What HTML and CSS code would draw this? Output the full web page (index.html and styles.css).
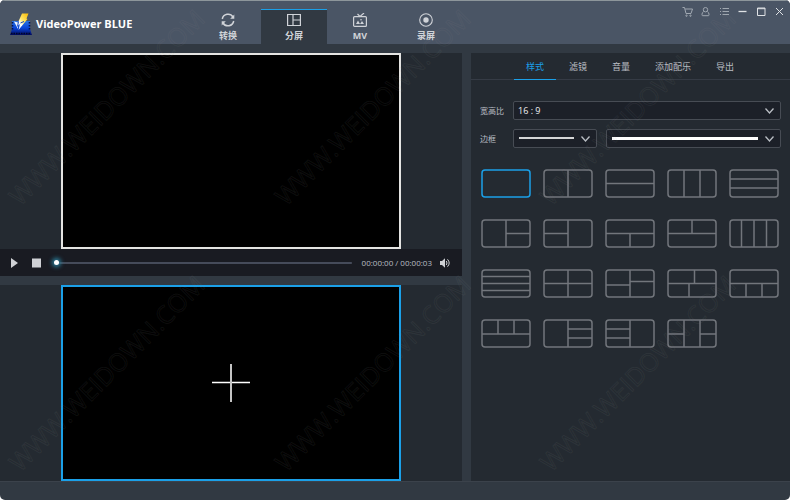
FILE: index.html
```html
<!DOCTYPE html>
<html lang="zh-CN">
<head>
<meta charset="utf-8">
<meta name="viewport" content="width=device-width, initial-scale=1">
<title>VideoPower BLUE</title>
<link rel="stylesheet" href="styles.css">
</head>
<body>
<div class="window">
  <header class="header">
    <div class="brand">
      <svg class="brand-logo" viewBox="0 0 22 22" aria-hidden="true">
        <defs>
          <linearGradient id="film" x1="0" y1="0" x2="0" y2="1">
            <stop offset="0" stop-color="#2c74e0"/><stop offset=".5" stop-color="#0a45d8"/><stop offset="1" stop-color="#020a5c"/>
          </linearGradient>
          <linearGradient id="bolt" x1="1" y1="0" x2="0" y2="1">
            <stop offset="0" stop-color="#f7b800"/><stop offset=".4" stop-color="#ffe566"/><stop offset=".6" stop-color="#fff"/><stop offset="1" stop-color="#c9dcff"/>
          </linearGradient>
        </defs>
        <path d="M2 8h18v8l2 6H0l2-6z" fill="url(#film)"/>
        <path d="M2.5 9v9M19.5 9v9" stroke="#04134f" stroke-width="1.6" stroke-dasharray="1.5 1.5"/>
        <path d="M1 20.5h20" stroke="#01052b" stroke-width="1.4" stroke-dasharray="1.5 1"/>
        <path d="M12 0.500h6.500l-2 5 1 .5L8.500 17l1.500-6-2 1.500L8 16 4 8.500l4 1z" fill="url(#bolt)"/>
        <path d="M8.500 8.500l-1 5M10.500 10l3.500-1.500" stroke="#1748bd" stroke-width="1" fill="none"/>
      </svg>
      <span class="brand-name">VideoPower BLUE</span>
    </div>
    <nav class="modes">
      <a class="mode" href="#convert">
        <svg viewBox="0 0 14 14" aria-hidden="true"><path d="M1.300 6A5.800 5.800 0 0 1 12 4M12.700 8A5.800 5.800 0 0 1 2 10" stroke-width="1.500"/><path d="M13.300 1.500v4.200H9.200zM.7 12.500V8.300h4.100z" fill="currentColor" stroke="none"/></svg>
        <span>转换</span>
      </a>
      <a class="mode mode-active" href="#split" aria-current="page">
        <svg viewBox="0 0 14 14" aria-hidden="true"><path d="M.6 1.500h12.800v11H.6zM6 1.500v11M6 7h7.400" stroke-width="1.200"/></svg>
        <span>分屏</span>
      </a>
      <a class="mode" href="#mv">
        <svg viewBox="0 0 14 14" aria-hidden="true"><rect x=".6" y="3.600" width="12.800" height="9.800" rx="1" stroke-width="1.200"/><path d="M4.500 1l2.500 2.500L11 0" stroke-width="1.200"/><path d="M3 11l2-3.500L7 11zM7 11l2-3 2 3z" fill="currentColor" stroke="none"/><circle cx="8" cy="6.800" r=".8" fill="currentColor" stroke="none"/></svg>
        <span>MV</span>
      </a>
      <a class="mode" href="#record">
        <svg viewBox="0 0 14 14" aria-hidden="true"><circle cx="7" cy="7" r="6.300" stroke-width="1.100"/><circle cx="7" cy="7" r="2.700" fill="currentColor" stroke="none"/></svg>
        <span>录屏</span>
      </a>
    </nav>
    <div class="window-tools">
      <button type="button" aria-label="购物车"><svg viewBox="0 0 13 13"><path d="M1.500 2.500h2l1.500 6h5l1.500-4.500H4.200"/><circle cx="5.500" cy="10.700" r=".7"/><circle cx="9.500" cy="10.700" r=".7"/></svg></button>
      <button type="button" aria-label="用户"><svg viewBox="0 0 13 13"><circle cx="6.500" cy="4.700" r="2.200"/><path d="M4.700 6.500Q3 7.500 3 9.300V10q0 .7.700.7h5.600q.7 0 .7-.7v-.7q0-1.800-1.700-2.800"/></svg></button>
      <button type="button" aria-label="菜单"><svg viewBox="0 0 13 13"><path d="M2 3.500h1M2 6.500h1M2 9.500h1M4.500 3.500H11M4.500 6.500H11M4.500 9.500H11"/></svg></button>
      <button type="button" class="bright" aria-label="最小化"><svg viewBox="0 0 13 13"><path d="M2.500 6.500h8" stroke-width="1.300"/></svg></button>
      <button type="button" class="bright" aria-label="最大化"><svg viewBox="0 0 13 13"><path d="M2.500 3h7.500v7.500H2.500zM2.500 3.700H10"/></svg></button>
      <button type="button" class="bright" aria-label="关闭"><svg viewBox="0 0 13 13"><path d="M3 3l7 7M10 3l-7 7"/></svg></button>
    </div>
  </header>

  <main class="workspace">
    <section class="player">
      <div class="stage"><div class="screen"></div></div>
      <div class="controls">
        <button type="button" aria-label="播放"><svg viewBox="0 0 10 10"><path d="M1 0v10L8 5z"/></svg></button>
        <button type="button" aria-label="停止"><svg viewBox="0 0 10 10"><path d="M0 .5h9v9H0z"/></svg></button>
        <input class="seek" type="range" min="0" max="100" value="0" aria-label="播放进度">
        <span class="time">00:00:00 / 00:00:03</span>
        <button type="button" aria-label="音量"><svg viewBox="0 0 10 10"><path d="M0 3h2l3-2.800v9.600L2 7H0z"/><path class="wave" d="M6.300 3q1.400 2 0 4M7.500 1.300q3.400 3.700 0 7.400"/></svg></button>
      </div>
      <div class="stage stage-source">
        <button type="button" class="screen screen-selected" aria-label="添加视频">
          <svg class="plus" viewBox="0 0 38 38"><path d="M0 18.500h38" stroke="#fff" stroke-width="1.500"/><path d="M19 0v38" stroke="#c4c4c4" stroke-width="2"/></svg>
        </button>
      </div>
    </section>

    <aside class="settings">
      <nav class="tabs">
        <a class="tab tab-active" href="#style" aria-current="true">样式</a>
        <a class="tab" href="#filter">滤镜</a>
        <a class="tab" href="#volume">音量</a>
        <a class="tab" href="#music">添加配乐</a>
        <a class="tab" href="#export">导出</a>
      </nav>
      <form class="options">
        <label for="ratio">宽高比</label>
        <div class="fields">
          <div class="field">
            <select id="ratio"><option>16 : 9</option><option>4 : 3</option><option>1 : 1</option></select>
            <svg class="chevron" viewBox="0 0 9 6"><path d="M.5.500l4 4.500 4-4.500"/></svg>
          </div>
        </div>
        <label for="border-width">边框</label>
        <div class="fields">
          <div class="field field-narrow">
            <select id="border-width" class="line-select"><option>2</option><option>4</option></select>
            <span class="line line-thin"></span>
            <svg class="chevron" viewBox="0 0 9 6"><path d="M.5.500l4 4.500 4-4.500"/></svg>
          </div>
          <div class="field">
            <select class="line-select" aria-label="边框颜色"><option>白</option><option>黑</option></select>
            <span class="line"></span>
            <svg class="chevron" viewBox="0 0 9 6"><path d="M.5.500l4 4.500 4-4.500"/></svg>
          </div>
        </div>
      </form>
      <div class="layouts">
        <button type="button" class="layout layout-active" aria-label="布局 1" aria-pressed="true"><svg viewBox="0 0 50 29"><rect x="1" y="1" width="48" height="27" rx="3"/></svg></button>
        <button type="button" class="layout" aria-label="布局 2"><svg viewBox="0 0 50 29"><rect x="1" y="1" width="48" height="27" rx="3"/><path d="M25 1v27"/></svg></button>
        <button type="button" class="layout" aria-label="布局 3"><svg viewBox="0 0 50 29"><rect x="1" y="1" width="48" height="27" rx="3"/><path d="M1 14.500h48"/></svg></button>
        <button type="button" class="layout" aria-label="布局 4"><svg viewBox="0 0 50 29"><rect x="1" y="1" width="48" height="27" rx="3"/><path d="M17 1v27M33 1v27"/></svg></button>
        <button type="button" class="layout" aria-label="布局 5"><svg viewBox="0 0 50 29"><rect x="1" y="1" width="48" height="27" rx="3"/><path d="M1 10h48M1 19h48"/></svg></button>
        <button type="button" class="layout" aria-label="布局 6"><svg viewBox="0 0 50 29"><rect x="1" y="1" width="48" height="27" rx="3"/><path d="M25 1v27M25 14.500h24"/></svg></button>
        <button type="button" class="layout" aria-label="布局 7"><svg viewBox="0 0 50 29"><rect x="1" y="1" width="48" height="27" rx="3"/><path d="M25 1v27M1 14.500h24"/></svg></button>
        <button type="button" class="layout" aria-label="布局 8"><svg viewBox="0 0 50 29"><rect x="1" y="1" width="48" height="27" rx="3"/><path d="M1 14.500h48M25 14.500V28"/></svg></button>
        <button type="button" class="layout" aria-label="布局 9"><svg viewBox="0 0 50 29"><rect x="1" y="1" width="48" height="27" rx="3"/><path d="M1 14.500h48M25 1v13.500"/></svg></button>
        <button type="button" class="layout" aria-label="布局 10"><svg viewBox="0 0 50 29"><rect x="1" y="1" width="48" height="27" rx="3"/><path d="M12.500 1v27M25 1v27M37.500 1v27"/></svg></button>
        <button type="button" class="layout" aria-label="布局 11"><svg viewBox="0 0 50 29"><rect x="1" y="1" width="48" height="27" rx="3"/><path d="M1 7.500h48M1 14.500h48M1 21.500h48"/></svg></button>
        <button type="button" class="layout" aria-label="布局 12"><svg viewBox="0 0 50 29"><rect x="1" y="1" width="48" height="27" rx="3"/><path d="M25 1v27M1 14.500h48"/></svg></button>
        <button type="button" class="layout" aria-label="布局 13"><svg viewBox="0 0 50 29"><rect x="1" y="1" width="48" height="27" rx="3"/><path d="M25 1v27M1 16h24M25 12.500h24"/></svg></button>
        <button type="button" class="layout" aria-label="布局 14"><svg viewBox="0 0 50 29"><rect x="1" y="1" width="48" height="27" rx="3"/><path d="M1 14.500h48M27.500 1v13.500M22 14.500V28"/></svg></button>
        <button type="button" class="layout" aria-label="布局 15"><svg viewBox="0 0 50 29"><rect x="1" y="1" width="48" height="27" rx="3"/><path d="M1 14.500h48M17 14.500V28M33 14.500V28"/></svg></button>
        <button type="button" class="layout" aria-label="布局 16"><svg viewBox="0 0 50 29"><rect x="1" y="1" width="48" height="27" rx="3"/><path d="M1 15h48M17 1v14M33 1v14"/></svg></button>
        <button type="button" class="layout" aria-label="布局 17"><svg viewBox="0 0 50 29"><rect x="1" y="1" width="48" height="27" rx="3"/><path d="M25 1v27M25 10h24M25 19h24"/></svg></button>
        <button type="button" class="layout" aria-label="布局 18"><svg viewBox="0 0 50 29"><rect x="1" y="1" width="48" height="27" rx="3"/><path d="M25 1v27M1 10h24M1 19h24"/></svg></button>
        <button type="button" class="layout" aria-label="布局 19"><svg viewBox="0 0 50 29"><rect x="1" y="1" width="48" height="27" rx="3"/><path d="M17 1v27M33 1v27M1 15h16M33 15h16"/></svg></button>
      </div>
    </aside>
  </main>
  <footer class="footer"></footer>

  <svg class="watermark" aria-hidden="true">
    <g>
      <text transform="translate(20 207) rotate(-45)">WWW.WEIDOWN.COM</text>
      <text transform="translate(286 207) rotate(-45)">WWW.WEIDOWN.COM</text>
      <text transform="translate(551 207) rotate(-45)">WWW.WEIDOWN.COM</text>
      <text transform="translate(20 473) rotate(-45)">WWW.WEIDOWN.COM</text>
      <text transform="translate(286 473) rotate(-45)">WWW.WEIDOWN.COM</text>
      <text transform="translate(551 473) rotate(-45)">WWW.WEIDOWN.COM</text>
    </g>
  </svg>
</div>
</body>
</html>
```
FILE: styles.css
```css
* {
  box-sizing: border-box;
}

body {
  margin: 0;
  background: #fff;
  color: #b9bdc3;
  font: 9px/12px "Open Sans", "Noto Sans CJK SC", sans-serif;
}

button {
  padding: 0;
  border: 0;
  background: none;
  color: inherit;
  font: inherit;
}

a {
  color: inherit;
  text-decoration: none;
}

svg {
  display: block;
}

.window {
  position: relative;
  display: flex;
  flex-direction: column;
  min-height: 100vh;
  overflow: hidden;
  border-radius: 5px;
  background: #313942;
}

/* Header */

.header {
  display: flex;
  height: 44px;
  border-top: 1px solid #8d969b;
  background: #4a5565;
}

.brand {
  display: flex;
  flex: 0 0 195px;
  align-items: center;
  gap: 4px;
  padding: 3px 0 0 10px;
}

.brand-logo {
  width: 22px;
  height: 22px;
}

.brand-name {
  color: #fff;
  font-size: 11px;
  font-weight: 700;
}

.modes {
  display: flex;
  flex: 1;
  padding-top: 8px;
}

.mode {
  display: flex;
  flex-direction: column;
  align-items: center;
  gap: 3px;
  width: 66px;
  padding-top: 3px;
  border-top: 1px solid transparent;
  color: #d0d3d8;
  font-weight: 700;
}

.mode svg {
  width: 14px;
  height: 14px;
  fill: none;
  stroke: currentColor;
}

.mode-active {
  border-top-color: #1ba0e8;
  background: #313942;
}

.window-tools {
  display: flex;
  justify-content: space-between;
  width: 109px;
  padding: 4px 4px 0 0;
}

.window-tools button {
  width: 13px;
  height: 13px;
  color: #a0a8b1;
}

.window-tools .bright {
  color: #dfe2e5;
}

.window-tools svg {
  fill: none;
  stroke: currentColor;
}

/* Workspace */

.workspace {
  display: grid;
  flex: 1;
  grid-template-columns: 462fr 319fr;
  gap: 9px;
  padding-top: 9px;
}

.player {
  display: flex;
  flex-direction: column;
}

.stage {
  display: flex;
  flex: 1;
  padding: 0 61px;
  background: #242a31;
}

.stage-source {
  margin-top: 9px;
}

.screen {
  flex: 1;
  border: 2px solid #e4e4e2;
  background: #000;
}

.screen-selected {
  display: grid;
  place-items: center;
  border-color: #1ba0e8;
}

.plus {
  width: 38px;
  height: 38px;
}

.controls {
  display: flex;
  align-items: center;
  gap: 8px;
  height: 27px;
  padding: 0 12px 0 10px;
  background: #191b22;
}

.controls button + button {
  margin-left: 4px;
}

.controls button svg {
  width: 10px;
  height: 10px;
  fill: #cfd1d5;
}

.controls .wave {
  fill: none;
  stroke: #cfd1d5;
}

.seek {
  flex: 1;
  min-width: 0;
  height: 12px;
  margin: 0 2px 0 4px;
  appearance: none;
  background: linear-gradient(#454b5a, #454b5a) center / 100% 2px no-repeat;
}

.seek::-webkit-slider-thumb {
  width: 5px;
  height: 5px;
  appearance: none;
  border-radius: 50%;
  background: #fff;
  box-shadow: 0 0 4px 2px #2b7f9c;
}

.time {
  font-size: 8px;
  white-space: nowrap;
}

/* Settings panel */

.settings {
  background: #242a31;
}

.tabs {
  display: flex;
  gap: 1px;
  height: 27px;
  padding-left: 43px;
  border-bottom: 1px solid #353b45;
}

.tab {
  height: 27px;
  padding: 0 12px;
  border-bottom: 1px solid transparent;
  line-height: 27px;
}

.tab-active {
  border-bottom-color: #1ba0e8;
  color: #1ba0e8;
}

.options {
  display: grid;
  grid-template-columns: 24px 1fr;
  align-items: center;
  gap: 9px;
  padding: 21px 9px 0;
}

.options label {
  font-size: 8px;
  white-space: nowrap;
}

.fields {
  display: flex;
  gap: 9px;
}

.field {
  position: relative;
  display: flex;
  flex: 1;
}

.field-narrow {
  flex: 0 0 84px;
}

.field select {
  width: 100%;
  height: 19px;
  padding: 0 4px;
  appearance: none;
  border: 1px solid #474c54;
  border-radius: 2px;
  background: #1c2028;
  color: #f0f1f3;
  font: inherit;
}

.field .line-select {
  color: transparent;
}

.line {
  position: absolute;
  top: 8px;
  right: 23px;
  left: 6px;
  height: 3px;
  background: #fff;
  pointer-events: none;
}

.line-thin {
  height: 2px;
  background: #d5d6d7;
}

.chevron {
  position: absolute;
  top: 7px;
  right: 7px;
  width: 9px;
  height: 6px;
  fill: none;
  stroke: #b9bdc3;
  stroke-width: 1.3;
  pointer-events: none;
}

.layouts {
  display: grid;
  grid-template-columns: repeat(5, 50px);
  justify-content: space-between;
  row-gap: 21px;
  padding: 21px 11px 0 10px;
}

.layout {
  height: 29px;
}

.layout svg {
  width: 50px;
  height: 29px;
  fill: none;
  stroke: #72767c;
  stroke-width: 1.5;
}

.layout-active svg {
  stroke: #1ba0e8;
}

.footer {
  height: 19px;
  border-top: 1px solid #3b424b;
}

.watermark {
  position: absolute;
  inset: 0;
  width: 100%;
  height: 100%;
  fill: none;
  stroke: #8a8a8a;
  stroke-opacity: 0.1;
  font-size: 25px;
  pointer-events: none;
}
```
